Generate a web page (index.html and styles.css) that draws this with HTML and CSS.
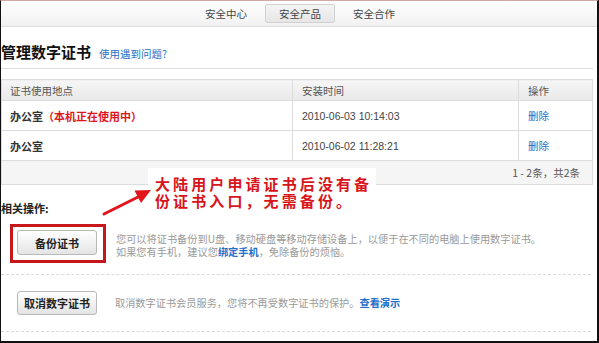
FILE: index.html
```html
<!DOCTYPE html>
<html lang="zh-CN">
<head>
<meta charset="utf-8">
<title>管理数字证书</title>
<link rel="stylesheet" href="styles.css">
</head>
<body>
<div class="frame">
  <nav class="nav">
    <span class="tab">安全中心</span>
    <span class="tab active">安全产品</span>
    <span class="tab">安全合作</span>
  </nav>
  <div class="content">
    <div class="title-row">
      <h1 class="title">管理数字证书</h1>
      <a class="link help">使用遇到问题?</a>
    </div>
    <table class="cert-table">
      <thead>
        <tr><th class="c1">证书使用地点</th><th class="c2">安装时间</th><th class="c3">操作</th></tr>
      </thead>
      <tbody>
        <tr><td class="c1"><b class="place">办公室</b><b class="current">（本机正在使用中）</b></td><td class="c2 time">2010-06-03 10:14:03</td><td class="c3"><a class="link">删除</a></td></tr>
        <tr><td class="c1"><b class="place">办公室</b></td><td class="c2 time">2010-06-02 11:28:21</td><td class="c3"><a class="link">删除</a></td></tr>
      </tbody>
      <tfoot>
        <tr><td colspan="3" class="pager">1 - 2条，共2条</td></tr>
      </tfoot>
    </table>
    <div class="ops-title">相关操作:</div>
    <div class="op-row first">
      <div class="highlight"><button class="btn">备份证书</button></div>
      <p class="desc">您可以将证书备份到U盘、移动硬盘等移动存储设备上，以便于在不同的电脑上使用数字证书。<br>如果您有手机，建议您<a class="link strong">绑定手机</a>，免除备份的烦恼。</p>
    </div>
    <div class="op-row second">
      <button class="btn">取消数字证书</button>
      <p class="desc single">取消数字证书会员服务，您将不再受数字证书的保护。<a class="link strong">查看演示</a></p>
    </div>
  </div>
  <div class="note">大陆用户申请证书后没有备<br>份证书入口，无需备份。</div>
  <svg class="arrow" width="599" height="343" viewBox="0 0 599 343" aria-hidden="true">
    <line x1="104" y1="214" x2="140" y2="196" stroke="#e3141b" stroke-width="3" stroke-linecap="round"/>
    <polygon points="151,190 134.5,190.5 141,203" fill="#e3141b"/>
  </svg>
</div>
</body>
</html>
```
FILE: styles.css
```css
* { box-sizing: border-box; }
html, body { margin: 0; padding: 0; background: #fff; }
body {
  font-family: "Noto Sans CJK SC", "Liberation Sans", sans-serif;
  font-size: 10.5px;
  color: #333;
}
.frame {
  position: relative;
  width: 599px;
  height: 343px;
  overflow: hidden;
  border-top: 1px solid #cfa9a2;
  border-left: 1px solid #111;
  border-right: 2px solid #111;
  border-bottom: 2px solid #111;
}
.nav {
  height: 26px;
  display: flex;
  justify-content: center;
  align-items: center;
  gap: 4px;
  background: linear-gradient(#ffffff, #f1f1f1);
  border-bottom: 1px solid #dcdcdc;
  padding-left: 2px;
}
.tab {
  height: 19px;
  line-height: 18px;
  padding: 0 13px;
  color: #444;
  border: 1px solid transparent;
  border-radius: 2px;
}
.tab.active {
  background: linear-gradient(#f4f4f4, #e6e6e6);
  border-color: #d0d0d0;
}
.content {
  padding-right: 4px;
}
.title-row {
  display: flex;
  align-items: baseline;
  gap: 8px;
  height: 42px;
  padding-top: 15px;
  border-bottom: 1px solid #dedede;
}
.title {
  margin: 0;
  font-size: 15px;
  font-weight: bold;
  line-height: 20px;
  color: #111;
}
.link {
  color: #1f6fc9;
  text-decoration: none;
}
.help { font-size: 10.5px; }
.cert-table {
  margin-top: 10px;
  width: 592px;
  border-collapse: collapse;
  border: 1px solid #dcdcdc;
}
.cert-table th {
  height: 21px;
  padding: 0 0 0 8px;
  text-align: left;
  font-weight: normal;
  color: #555;
  background: linear-gradient(#f6f6f6, #e9e9e9);
  border-bottom: 1px solid #dcdcdc;
}
.cert-table td {
  height: 30px;
  padding: 0 0 0 8px;
  border-bottom: 1px solid #dcdcdc;
}
.cert-table .c1 { width: 291px; }
.cert-table .c2 { width: 226px; padding-left: 9px; border-left: 1px solid #dcdcdc; }
.cert-table .c3 { border-left: 1px solid #dcdcdc; padding-left: 9px; }
.place { color: #333; font-size: 11px; }
.current { color: #e0141b; font-size: 11px; }
.time {
  font-family: "Liberation Sans", sans-serif;
  font-size: 10.5px;
  color: #444;
}
.cert-table td.pager {
  height: 24px;
  text-align: right;
  padding-right: 12px;
  background: #f5f5f5;
  color: #555;
  border-bottom: 1px solid #dcdcdc;
}
.ops-title {
  margin-top: 17px;
  line-height: 12px;
  font-weight: bold;
  font-size: 11px;
  color: #222;
}
.op-row {
  display: flex;
  align-items: flex-start;
  border-bottom: 1px dashed #dadada;
  width: 590px;
}
.op-row.first {
  padding: 10px 0 11px 9px;
}
.op-row.second {
  padding: 16px 0 16px 16px;
}
.highlight {
  width: 96px;
  height: 39px;
  border: 3px solid #c8161d;
  padding: 3px 0 0 4px;
}
.btn {
  width: 80px;
  height: 25px;
  padding: 0;
  font-family: "Noto Sans CJK SC", sans-serif;
  font-size: 11px;
  font-weight: bold;
  color: #222;
  background: linear-gradient(#ffffff, #e4e4e4);
  border: 1px solid #b9b9b9;
  border-radius: 3px;
}
.op-row.second .btn { height: 24px; }
.desc {
  margin: 0;
  color: #9a9a9a;
  font-size: 10.2px;
  line-height: 13px;
}
.op-row.first .desc { margin: 8px 0 0 10px; }
.op-row.second .desc { margin: 5px 0 0 18px; }
.strong { font-weight: bold; }
.note {
  position: absolute;
  left: 147px;
  top: 167px;
  width: 228px;
  height: 46px;
  background: #fff;
  padding: 7px 0 0 7px;
  color: #d8141b;
  font-weight: bold;
  font-size: 15px;
  line-height: 17px;
  letter-spacing: 3.1px;
  white-space: nowrap;
}
.arrow {
  position: absolute;
  left: -1px;
  top: -1px;
  pointer-events: none;
}
```
